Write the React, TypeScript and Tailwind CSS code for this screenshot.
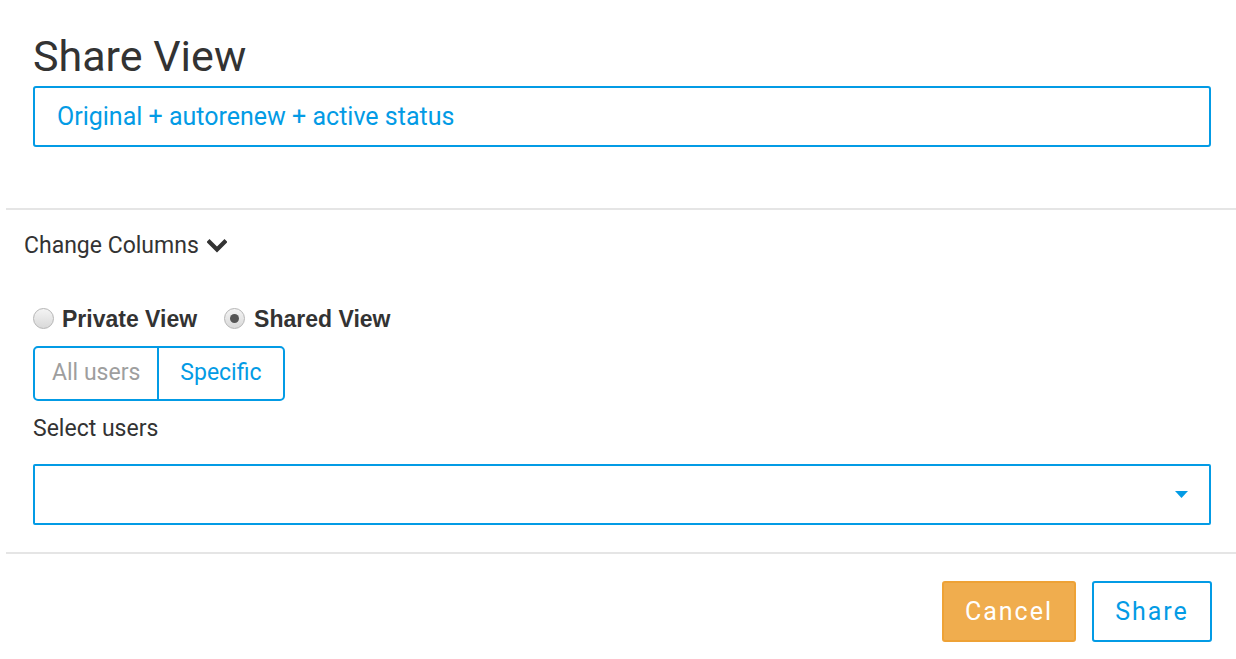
import React from 'react'

function Radio({ checked }: { checked?: boolean }) {
  return (
    <span className="flex h-[21px] w-[21px] items-center justify-center rounded-full border border-[#b5b5b5] bg-gradient-to-b from-[#f4f4f4] to-[#d9d9d9]">
      {checked && <span className="h-[9px] w-[9px] rounded-full bg-[#555]" />}
    </span>
  )
}

export default function App() {
  return (
    <div className="min-h-screen bg-white pl-[6px] font-['Roboto',sans-serif] text-[#333]">
      <div className="pl-[27px] pr-[25px] pt-[27px] pb-[61px]">
        <h1 className="text-[43px] leading-[59px] font-normal">Share View</h1>
        <div className="flex h-[61px] items-center rounded-[3px] border-2 border-[#039be5] px-[22px] text-[25px] text-[#039be5]">
          Original + autorenew + active status
        </div>
      </div>
      <div className="h-[2px] bg-[#e5e5e5]" />
      <div className="px-[18px] pt-[19px]">
        <button className="flex items-center gap-[8px] text-[23px] text-[#333]">
          Change Columns
          <svg width="20" height="14" viewBox="0 0 20 14">
            <path d="M2.5 3 L10 10.5 L17.5 3" fill="none" stroke="#333" strokeWidth="4.2" strokeLinecap="square" />
          </svg>
        </button>
      </div>
      <div className="pl-[27px] pr-[25px] pt-[38px] pb-[27px]">
        <div className="flex items-center font-['Liberation_Sans',sans-serif] text-[23px] font-bold text-[#333]">
          <label className="flex items-center gap-[8px]">
            <Radio />
            Private View
          </label>
          <label className="ml-[27px] flex items-center gap-[9px]">
            <Radio checked />
            Shared View
          </label>
        </div>
        <div className="mt-[10px] inline-flex h-[55px] overflow-hidden rounded-[5px] border-2 border-[#039be5] text-[23px]">
          <span className="flex items-center border-r-2 border-[#039be5] px-[17px] text-[#9e9e9e]">All users</span>
          <span className="flex items-center px-[21px] text-[#039be5]">Specific</span>
        </div>
        <div className="mt-[12px] text-[23px] leading-[32px] text-[#333]">Select users</div>
        <div className="mt-[19px] flex h-[61px] items-center justify-end rounded-[2px] border-2 border-[#039be5] pr-[21px]">
          <svg width="13" height="7" viewBox="0 0 13 7">
            <path d="M0 0 L13 0 L6.5 7 Z" fill="#039be5" />
          </svg>
        </div>
      </div>
      <div className="h-[2px] bg-[#e5e5e5]" />
      <div className="flex justify-end gap-[16px] pr-[24px] pt-[27px]">
        <button className="h-[61px] w-[134px] rounded-[3px] border-2 border-[#eea236] bg-[#f0ad4e] text-[25px] tracking-[2px] text-white">
          Cancel
        </button>
        <button className="h-[61px] w-[120px] rounded-[3px] border-2 border-[#039be5] bg-white text-[25px] tracking-[2px] text-[#039be5]">
          Share
        </button>
      </div>
    </div>
  )
}
